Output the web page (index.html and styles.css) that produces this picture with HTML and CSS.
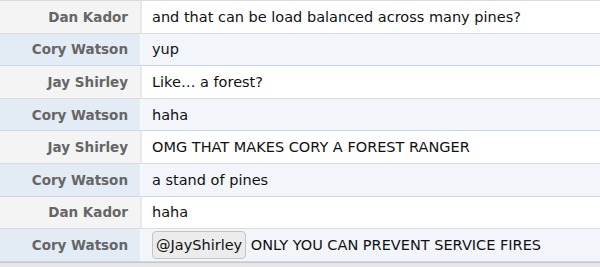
FILE: index.html
```html
<!DOCTYPE html>
<html lang="en">
<head>
    <meta charset="UTF-8">
    <title>Chat log</title>
    <link rel="stylesheet" href="styles.css">
</head>
<body>
    <div class="log">
        <div class="row">
            <div class="nick">Dan Kador</div>
            <div class="msg">and that can be load balanced across many pines?</div>
        </div>
        <div class="row self">
            <div class="nick">Cory Watson</div>
            <div class="msg">yup</div>
        </div>
        <div class="row">
            <div class="nick">Jay Shirley</div>
            <div class="msg">Like… a forest?</div>
        </div>
        <div class="row self">
            <div class="nick">Cory Watson</div>
            <div class="msg">haha</div>
        </div>
        <div class="row">
            <div class="nick">Jay Shirley</div>
            <div class="msg">OMG THAT MAKES CORY A FOREST RANGER</div>
        </div>
        <div class="row self">
            <div class="nick">Cory Watson</div>
            <div class="msg">a stand of pines</div>
        </div>
        <div class="row">
            <div class="nick">Dan Kador</div>
            <div class="msg">haha</div>
        </div>
        <div class="row self">
            <div class="nick">Cory Watson</div>
            <div class="msg"><span class="mention">@JayShirley</span> ONLY YOU CAN PREVENT SERVICE FIRES</div>
        </div>
    </div>
    <div class="footer"></div>
</body>
</html>
```

FILE: styles.css
```css
* {
    margin: 0;
    padding: 0;
    box-sizing: border-box;
}

body {
    font-family: "DejaVu Sans", sans-serif;
    font-size: 14.5px;
    background: #e6e6e6;
}

.log {
    border-top: 1px solid #dcdcdc;
    background: #fff;
}

.row {
    display: flex;
    align-items: center;
    height: 32.6px;
    border-bottom: 1px solid #dcdcdc;
}

.nick {
    align-self: stretch;
    display: flex;
    align-items: center;
    justify-content: flex-end;
    width: 142px;
    padding-right: 12px;
    font-size: 13.5px;
    font-weight: bold;
    color: #666;
    background: #f4f4f4;
    border-right: 2px solid #e9e9e9;
}

.msg {
    align-self: stretch;
    display: flex;
    align-items: center;
    flex: 1;
    padding-left: 10px;
    color: #111;
    white-space: pre;
}

.row.self {
    border-bottom-color: #c8d8ea;
}

.row.self .nick {
    background: #e3ebf5;
    border-right-color: #f4f7fb;
}

.row.self .msg {
    background: #f2f5fa;
}

.mention {
    line-height: 26px;
    padding: 0 3px;
    background: #ececec;
    border: 1px solid #c4c4c4;
    border-radius: 4px;
}

.footer {
    height: 4px;
    border-top: 1px solid #c8c8c8;
}
```
